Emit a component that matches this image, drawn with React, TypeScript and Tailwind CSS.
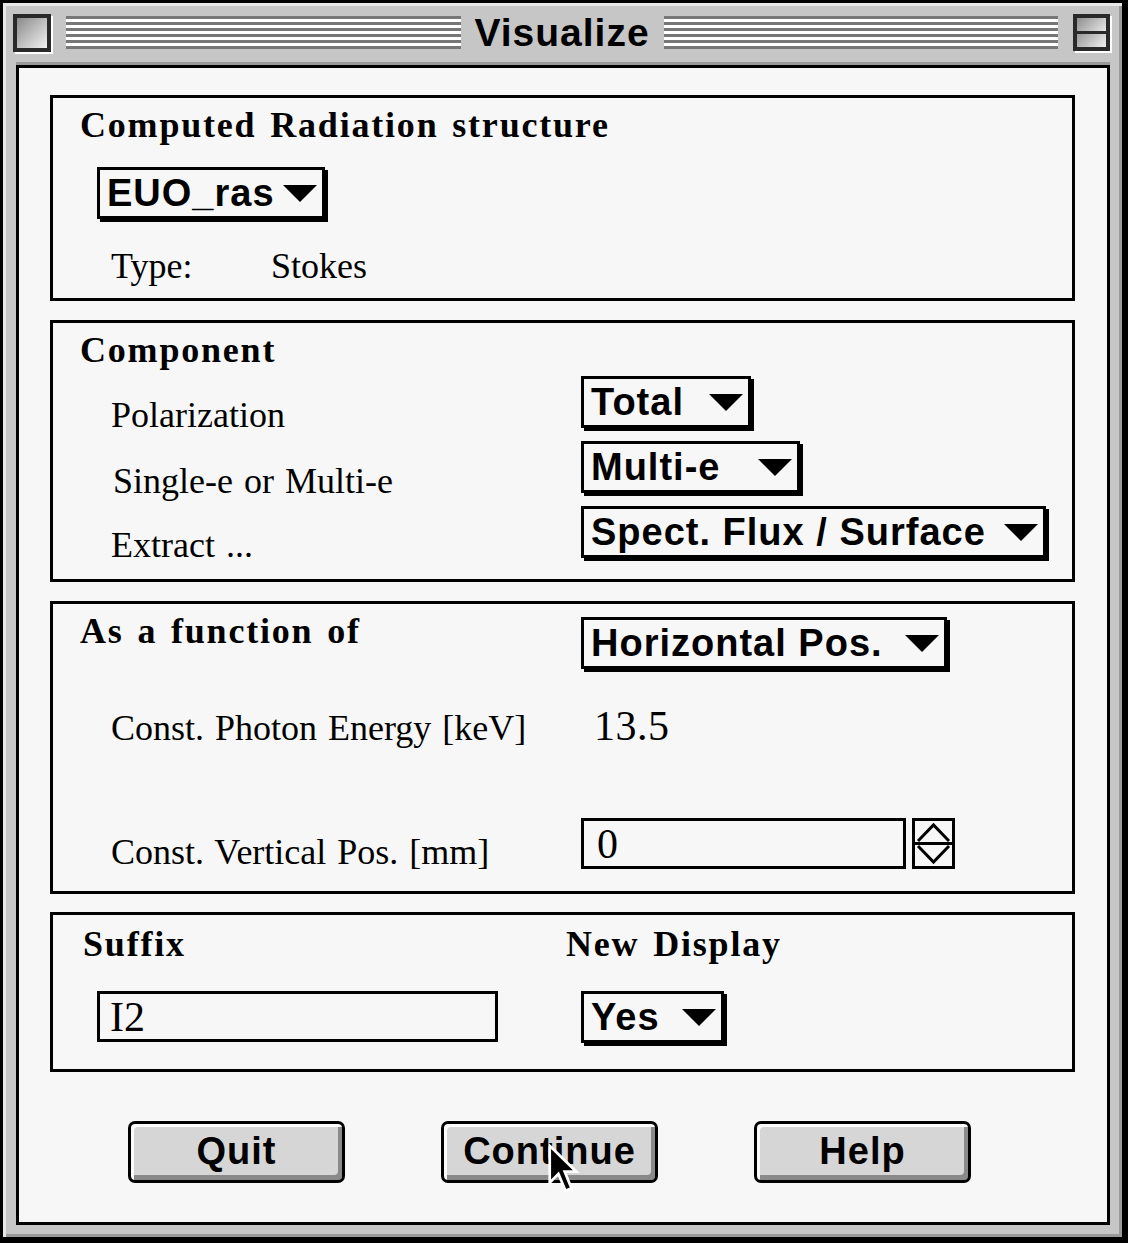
import React from "react";

const serif = "font-['Liberation_Serif',serif] text-[36px] leading-none text-black [word-spacing:2px]";
const serifBold =
  "font-['Liberation_Serif',serif] font-bold text-[36px] leading-none tracking-[1.8px] [word-spacing:3px] text-black";
const sans = "font-['Liberation_Sans',sans-serif] font-bold text-[38px] leading-none tracking-[1px] text-black";
const fieldText = "font-['Liberation_Serif',serif] text-[42px] leading-none text-black";

function Arrow() {
  return (
    <svg width="34" height="17" viewBox="0 0 34 17" className="shrink-0">
      <polygon points="0,0 34,0 17,17" fill="#000" />
    </svg>
  );
}

function Popup({ label, w }: { label: string; w: string }) {
  return (
    <div
      className={`${w} h-[52px] shrink-0 border-[3px] border-black bg-[#f7f7f7] shadow-[3px_3px_0_#000] flex items-center justify-between pl-[7px] pr-[5px]`}
    >
      <span className={sans}>{label}</span>
      <Arrow />
    </div>
  );
}

function Stripes() {
  return (
    <div className="flex-1 flex flex-col gap-[3px] bg-white">
      {[0, 1, 2, 3, 4, 5].map((i) => (
        <div key={i} className="h-[3px] bg-[#777]" />
      ))}
    </div>
  );
}

function Stepper() {
  return (
    <div className="ml-[6px] w-[43px] h-[51px] border-[3px] border-black bg-[#f7f7f7]">
      <svg width="37" height="45" viewBox="0 0 37 45">
        <polyline points="3,20 18.5,4 34,20" fill="none" stroke="#000" strokeWidth="3" />
        <line x1="0" y1="22.5" x2="37" y2="22.5" stroke="#000" strokeWidth="3" />
        <polyline points="3,25 18.5,41 34,25" fill="none" stroke="#000" strokeWidth="3" />
      </svg>
    </div>
  );
}

function Cursor() {
  return (
    <svg width="34" height="52" viewBox="0 0 12.5 19" className="absolute left-[103px] top-[19px]">
      <path
        d="M1 1 L1 14.5 L4.2 11.3 L6.8 17.5 L9 16.6 L6.5 10.5 L10.8 10.5 Z"
        fill="#000"
        stroke="#fff"
        strokeWidth="1"
        strokeLinejoin="miter"
      />
    </svg>
  );
}

function Button({ label, children }: { label: string; children?: React.ReactNode }) {
  return (
    <div className="relative w-[217px] h-[62px] rounded-[7px] border-[3px] border-black bg-[#d6d6d6] shadow-[inset_3px_3px_0_#fbfbfb,inset_-4px_-5px_0_#8a8a8a] flex items-center justify-center pb-[3px]">
      <span className={sans}>{label}</span>
      {children}
    </div>
  );
}

export default function App() {
  return (
    <div className="w-[1128px] h-[1243px] bg-black pt-[3px] pl-[3px] pr-[6px] pb-[6px]">
      <div className="w-full h-full bg-[#c6c6c6] pl-[13px] pr-[12px] pb-[12px] flex flex-col shadow-[inset_3px_3px_0_#e8e8e8,inset_-3px_-3px_0_#9a9a9a]">
        {/* title bar */}
        <div className="h-[59px] flex items-center">
          <div className="-ml-[3px] w-[38px] h-[38px] border-[4px] border-[#2a2a2a] bg-[linear-gradient(135deg,#8a8a8a,#f2f2f2)] shadow-[2px_2px_0_#fff]" />
          <div className="ml-[15px] flex-1 flex items-center">
            <Stripes />
            <div className="w-[203px] text-center font-['Liberation_Sans',sans-serif] font-bold text-[39px] leading-none tracking-[1px] text-black">
              Visualize
            </div>
            <Stripes />
          </div>
          <div className="ml-[15px] w-[37px] h-[37px] border-[4px] border-[#2a2a2a] flex flex-col shadow-[2px_2px_0_#fff]">
            <div className="flex-1 bg-[linear-gradient(135deg,#8e8e8e,#e8e8e8)]" />
            <div className="h-[3px] bg-[#2a2a2a]" />
            <div className="flex-1 bg-[linear-gradient(135deg,#9a9a9a,#f0f0f0)]" />
          </div>
        </div>
        <div className="h-[3px] bg-[#999]" />

        {/* content */}
        <div className="h-[1160px] border-[3px] border-black bg-[#f7f7f7] pt-[27px] pl-[31px] pr-[32px]">
          {/* computed radiation structure */}
          <div className="h-[206px] border-[3px] border-black pt-[9px] pl-[27px]">
            <div className={serifBold}>Computed Radiation structure</div>
            <div className="mt-[24px] ml-[17px]">
              <Popup label="EUO_ras" w="w-[228px]" />
            </div>
            <div className="mt-[29px] pl-[31px] flex">
              <span className={`${serif} w-[160px]`}>Type:</span>
              <span className={serif}>Stokes</span>
            </div>
          </div>

          {/* component */}
          <div className="mt-[19px] h-[262px] border-[3px] border-black pt-[9px] pl-[27px]">
            <div className={serifBold}>Component</div>
            <div className="mt-[8px] flex flex-col gap-[13px]">
              <div className="h-[52px] flex items-start">
                <div className={`${serif} w-[501px] pl-[31px] pt-[21px]`}>Polarization</div>
                <Popup label="Total" w="w-[170px]" />
              </div>
              <div className="h-[52px] flex items-start">
                <div className={`${serif} w-[501px] pl-[33px] pt-[22px]`}>Single-e or Multi-e</div>
                <Popup label="Multi-e" w="w-[219px]" />
              </div>
              <div className="h-[52px] flex items-start">
                <div className={`${serif} w-[501px] pl-[31px] pt-[21px]`}>Extract ...</div>
                <Popup label="Spect. Flux / Surface" w="w-[465px]" />
              </div>
            </div>
          </div>

          {/* as a function of */}
          <div className="mt-[19px] h-[293px] border-[3px] border-black pt-[9px] pl-[27px]">
            <div className="flex items-start">
              <div className={`${serifBold} w-[501px]`}>As a function of</div>
              <div className="mt-[4px]">
                <Popup label="Horizontal Pos." w="w-[366px]" />
              </div>
            </div>
            <div className="mt-[36px] flex items-baseline">
              <div className={`${serif} w-[514px] pl-[31px]`}>Const. Photon Energy [keV]</div>
              <div className={`${fieldText} tracking-[0.5px]`}>13.5</div>
            </div>
            <div className="mt-[71px] flex items-start">
              <div className={`${serif} w-[501px] pl-[31px] pt-[16px]`}>Const. Vertical Pos. [mm]</div>
              <div className="w-[325px] h-[51px] border-[3px] border-black bg-[#f7f7f7] flex items-center pl-[13px]">
                <span className={fieldText}>0</span>
              </div>
              <Stepper />
            </div>
          </div>

          {/* suffix / new display */}
          <div className="mt-[18px] h-[160px] border-[3px] border-black pt-[11px] pl-[30px] flex">
            <div className="w-[483px]">
              <div className={serifBold}>Suffix</div>
              <div className="mt-[29px] ml-[14px] w-[401px] h-[51px] border-[3px] border-black bg-[#f7f7f7] flex items-center pl-[10px]">
                <span className={fieldText}>I2</span>
              </div>
            </div>
            <div>
              <div className={serifBold}>New Display</div>
              <div className="mt-[29px] ml-[15px]">
                <Popup label="Yes" w="w-[143px]" />
              </div>
            </div>
          </div>

          {/* buttons */}
          <div className="mt-[49px] ml-[78px] flex gap-[96px]">
            <Button label="Quit" />
            <Button label="Continue">
              <Cursor />
            </Button>
            <Button label="Help" />
          </div>
        </div>
      </div>
    </div>
  );
}
